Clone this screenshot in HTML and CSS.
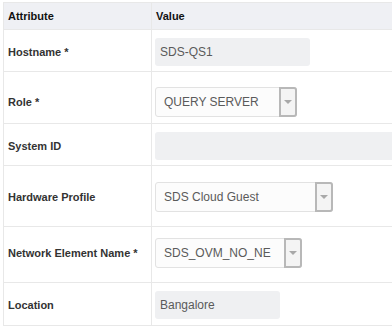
FILE: index.html
```html
<!DOCTYPE html>
<html lang="en">

<head>
    <meta charset="UTF-8" />
    <title>Server Attributes</title>
    <link rel="stylesheet" href="styles.css">
</head>

<body>
    <table class="attrTable">
        <tr class="head">
            <th class="colAttr">Attribute</th>
            <th>Value</th>
        </tr>
        <tr class="rowHost">
            <td class="label">Hostname *</td>
            <td><div class="field w155">SDS-QS1</div></td>
        </tr>
        <tr class="rowRole">
            <td class="label">Role *</td>
            <td>
                <div class="select w142">
                    <span>QUERY SERVER</span>
                    <span class="arrow"></span>
                </div>
            </td>
        </tr>
        <tr class="rowSys">
            <td class="label">System ID</td>
            <td><div class="field wide"></div></td>
        </tr>
        <tr class="rowHw">
            <td class="label">Hardware Profile</td>
            <td>
                <div class="select w178">
                    <span>SDS Cloud Guest</span>
                    <span class="arrow"></span>
                </div>
            </td>
        </tr>
        <tr class="rowNe">
            <td class="label">Network Element Name *</td>
            <td>
                <div class="select w147">
                    <span>SDS_OVM_NO_NE</span>
                    <span class="arrow"></span>
                </div>
            </td>
        </tr>
        <tr class="rowLoc">
            <td class="label">Location</td>
            <td><div class="field w125">Bangalore</div></td>
        </tr>
    </table>
</body>

</html>
```

FILE: styles.css
```css
* {
    margin: 0;
    padding: 0;
    box-sizing: border-box;
}

body {
    background: #ffffff;
    padding: 2px 0 0 3px;
    font-family: "Liberation Sans", Arial, sans-serif;
    font-size: 12px;
    overflow: hidden;
}

.attrTable {
    border-collapse: collapse;
    width: 389px;
}

.attrTable th,
.attrTable td {
    border: 1px solid #e8e8e8;
    text-align: left;
    vertical-align: middle;
}

.attrTable th:last-child,
.attrTable td:last-child {
    border-right: none;
}

.attrTable th {
    background: #eff0f4;
    color: #111;
    font-size: 11px;
    font-weight: bold;
    height: 27px;
    padding: 0 4px;
}

.colAttr {
    width: 148px;
}

.attrTable td {
    padding: 0 3px;
}

.attrTable td:last-child {
    padding-right: 0;
}

.attrTable td.label {
    color: #333;
    font-size: 11px;
    font-weight: bold;
    padding-left: 4px;
    white-space: nowrap;
}

/* per-row spacing around controls */
.rowHost td { padding-top: 8px; padding-bottom: 5px; }
.rowRole td { padding-top: 15px; padding-bottom: 6px; }
.rowSys td { padding-top: 8px; padding-bottom: 5px; }
.rowHw td { padding-top: 16px; padding-bottom: 14px; }
.rowNe td { padding-top: 11px; padding-bottom: 14px; }
.rowLoc td { padding-top: 8px; padding-bottom: 6px; }

.field {
    height: 28px;
    line-height: 28px;
    padding-left: 5px;
    background: #eff0f2;
    border-radius: 3px;
    color: #5a5a5a;
}

.wide { width: 100%; border-radius: 3px 0 0 3px; }
.w155 { width: 155px; }
.w125 { width: 125px; }
.w142 { width: 142px; }
.w178 { width: 178px; }
.w147 { width: 147px; }

.select {
    display: flex;
    justify-content: space-between;
    height: 30px;
    border: 1px solid #e2e2e2;
    border-radius: 3px;
    background: #fcfcfc;
    color: #5a5a5a;
}

.select span:first-child {
    line-height: 28px;
    padding-left: 8px;
}

.arrow {
    position: relative;
    width: 18px;
    margin: -1px -1px -1px 0;
    border: 2px solid #b8b8b8;
    border-radius: 0 3px 3px 0;
    background: #f4f4f4;
}

.arrow::after {
    content: "";
    position: absolute;
    left: 3px;
    top: 11px;
    border-left: 4px solid transparent;
    border-right: 4px solid transparent;
    border-top: 4px solid #a8a8a8;
}
```
